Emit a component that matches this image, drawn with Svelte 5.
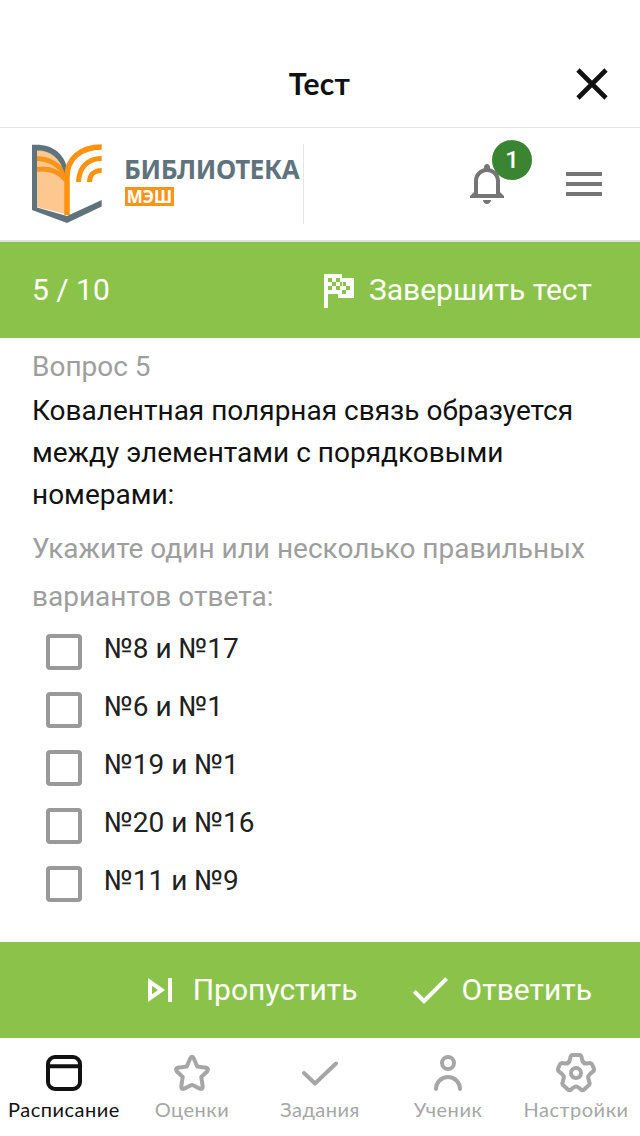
<script>
  let answers = [
    { text: '№8 и №17', checked: false },
    { text: '№6 и №1', checked: false },
    { text: '№19 и №1', checked: false },
    { text: '№20 и №16', checked: false },
    { text: '№11 и №9', checked: false }
  ];

  const tabs = [
    { id: 'schedule', label: 'Расписание' },
    { id: 'marks', label: 'Оценки' },
    { id: 'tasks', label: 'Задания' },
    { id: 'student', label: 'Ученик' },
    { id: 'settings', label: 'Настройки' }
  ];

  let activeTab = 'schedule';
</script>

<div class="screen">
  <header class="title-bar">
    <h1>Тест</h1>
    <button class="close" aria-label="Закрыть">
      <svg width="32" height="32" viewBox="0 0 32 32">
        <path d="M2 2l28 28M30 2l-28 28" fill="none" stroke="#111" stroke-width="4.6" />
      </svg>
    </button>
  </header>

  <div class="library-bar">
    <div class="logo">
      <svg width="70" height="80" viewBox="0 0 70 80">
        <path d="M5 6C18 7 29 13 33 27V70L5 63z" fill="#fdc88f" />
        <path d="M5 14.500Q23 15 33.500 31M5 25.500Q23 23 34 36" fill="none" stroke="#f7941d" stroke-width="5" />
        <path d="M0 .7H7C22 1.500 32 11 34.500 22L33 30C28 14 19 6.500 5 6.500V63.500L35 72L69.700 56V62.500L35 79L0 66z" fill="#5f737d" />
        <path d="M35 71V33C35 15 48 3 69.700 3" fill="none" stroke="#ff930f" stroke-width="5.500" />
        <path d="M46.500 38C47 24 55 14.500 69.700 14.500M57.500 38C57.500 31 62 26.500 69.700 26.500" fill="none" stroke="#ff930f" stroke-width="5" />
      </svg>
      <div class="logo-text">
        <span class="logo-name">БИБЛИОТЕКА</span>
        <span class="logo-tag">МЭШ</span>
      </div>
    </div>
    <div class="tools">
      <button class="bell" aria-label="Уведомления">
        <svg width="48" height="48" viewBox="0 0 24 24" fill="#757575">
          <path d="M11.5 22c1.1 0 2-.9 2-2h-4c0 1.100.9 2 2 2zm6.500-6v-5.500c0-3.070-2.130-5.640-5-6.320V3.500c0-.83-.67-1.500-1.500-1.500S10 2.670 10 3.500v.68c-2.870.68-5 3.250-5 6.320V16l-2 2v1h17v-1l-2-2zm-2 1H7v-6.500C7 8.010 9.010 6 11.500 6S16 8.010 16 10.500V17z" />
        </svg>
        <span class="badge">1</span>
      </button>
      <button aria-label="Меню">
        <svg width="48" height="48" viewBox="0 0 24 24" fill="#757575">
          <path d="M3 18h18v-2H3v2zm0-5h18v-2H3v2zm0-7v2h18V6H3z" />
        </svg>
      </button>
    </div>
  </div>

  <div class="action-bar progress">
    <span class="counter">5 / 10</span>
    <button class="finish">
      <svg width="48" height="48" viewBox="0 0 48 48" fill="#fff">
        <path d="M10 8H28V12H40V32H24V28H14V42H10z" />
        <path
          d="M14 12h4v4h-4zM22 12h4v4h-4zM18 16h4v4h-4zM26 16h6v4h-6zM14 20h4v4h-4zM22 20h4v4h-4zM32 20h4v4h-4zM28 24h4v4h-4z"
          fill="#8bc34a"
        />
        <path d="M28 16h1v4h-1z" />
      </svg>
      <span>Завершить тест</span>
    </button>
  </div>

  <main>
    <p class="number">Вопрос 5</p>
    <p class="question">Ковалентная полярная связь образуется<br />между элементами с порядковыми<br />номерами:</p>
    <p class="hint">Укажите один или несколько правильных<br />вариантов ответа:</p>
    <div class="answers">
      {#each answers as answer}
        <label class="answer">
          <input type="checkbox" bind:checked={answer.checked} />
          <span>{answer.text}</span>
        </label>
      {/each}
    </div>
  </main>

  <div class="action-bar actions">
    <button class="skip">
      <svg width="48" height="48" viewBox="0 0 24 24" fill="#fff">
        <path d="M6 18l8.500-6L6 6v12zm2-8.140L11.030 12 8 14.140V9.860zM16 6h2v12h-2z" />
      </svg>
      <span>Пропустить</span>
    </button>
    <button class="reply">
      <svg width="48" height="48" viewBox="0 0 24 24" fill="#fff">
        <path d="M9 16.170L4.830 12l-1.420 1.410L9 19 21 7l-1.410-1.410z" />
      </svg>
      <span>Ответить</span>
    </button>
  </div>

  <nav>
    {#each tabs as tab}
      <button class="tab {tab.id}" class:active={activeTab === tab.id} on:click={() => (activeTab = tab.id)}>
        <svg width="40" height="40" viewBox="0 0 40 40">
          {#if tab.id === 'schedule'}
            <rect x="4" y="4" width="32" height="32" rx="7" />
            <path d="M4 13.300h32" />
          {:else if tab.id === 'marks'}
            <path d="M18.300 5.200Q20 2.500 21.700 5.200L25.200 13.500L34.200 14.700Q37 15.700 35.300 18.200L29.300 24L30.700 33.500Q30.700 36.700 27.800 35.600L20 31.800L12.200 35.600Q9.300 36.700 9.300 33.500L10.700 24L4.700 18.200Q3 15.700 5.800 14.700L14.800 13.500z" />
          {:else if tab.id === 'tasks'}
            <path d="M4 20L15 30.500L36 10.500" />
          {:else if tab.id === 'student'}
            <circle cx="20" cy="10" r="6" />
            <path d="M8 36A12 12 0 0 1 32 36" />
          {:else}
            <circle cx="20" cy="20" r="5" />
            <path d="M16.500 2H23.500Q25 2 25.500 4L26.300 7.500Q27.500 11 31 10.500L34 10Q35.500 10 36.200 11.500L38 16Q38.500 17.500 37 18.500L34 21Q31.500 23 32.500 26L33.500 30Q34 31.500 32.500 32.500L28 36.500Q26.500 38 25 36.500L22.500 34.500Q20 32.500 17.500 34.500L15 36.500Q13.500 38 12 36.500L7.500 32.500Q6 31.500 6.500 30L7.500 26Q8.500 23 6 21L3 18.500Q1.500 17.500 2 16L3.800 11.500Q4.500 10 6 10L9 10.500Q12.500 11 13.700 7.500L14.500 4Q15 2 16.500 2z" />
          {/if}
        </svg>
        <span>{tab.label}</span>
      </button>
    {/each}
  </nav>
</div>

<style>
  :global(body) {
    margin: 0;
    background: #fff;
  }

  .screen {
    width: 640px;
    height: 1136px;
    display: flex;
    flex-direction: column;
    overflow: hidden;
    background: #fff;
    font-family: Roboto, 'Liberation Sans', sans-serif;
  }

  button {
    padding: 0;
    border: none;
    background: none;
    color: inherit;
    font: inherit;
    letter-spacing: inherit;
  }

  svg {
    display: block;
    flex-shrink: 0;
  }

  h1,
  p {
    margin: 0;
  }

  .title-bar {
    display: grid;
    grid-template-columns: 64px 1fr 32px;
    align-items: center;
    box-sizing: border-box;
    height: 128px;
    padding: 40px 32px 0;
    border-bottom: 1px solid #e4e2e6;
  }

  h1 {
    grid-column: 2;
    padding: 0 33px 2px 0;
    font-family: Lato, sans-serif;
    font-size: 30px;
    font-weight: 700;
    letter-spacing: 0.3px;
    line-height: 36px;
    text-align: center;
    color: #111;
  }

  .library-bar {
    display: flex;
    justify-content: space-between;
    box-sizing: border-box;
    height: 114px;
    padding: 16px 32px 0;
    border-bottom: 2px solid #e0e0e0;
  }

  .logo {
    display: flex;
    box-sizing: border-box;
    width: 272px;
    height: 80px;
    border-right: 1px solid #e6e6e6;
  }

  .logo-text {
    display: flex;
    flex-direction: column;
    align-items: flex-start;
    padding: 9px 0 0 22px;
    font-family: 'Noto Sans', sans-serif;
    font-weight: 700;
  }

  .logo-name {
    font-size: 26px;
    letter-spacing: -0.4px;
    line-height: 32px;
    color: #5f737d;
  }

  .logo-tag {
    width: 49px;
    height: 19px;
    margin: 2px 0 0 1px;
    background: #f7941d;
    font-size: 17px;
    line-height: 19px;
    text-align: center;
    color: #fff;
  }

  .tools {
    display: flex;
    gap: 48px;
    height: 48px;
    padding-top: 16px;
  }

  .bell {
    position: relative;
  }

  .badge {
    position: absolute;
    top: -20px;
    left: 28px;
    width: 40px;
    height: 40px;
    border-radius: 50%;
    background: #3b8532;
    color: #fff;
    font-size: 24px;
    font-weight: 500;
    line-height: 40px;
  }

  .action-bar {
    display: flex;
    align-items: center;
    box-sizing: border-box;
    height: 96px;
    padding: 0 48px 0 32px;
    background: #8bc34a;
    color: #fff;
    font-size: 30px;
    line-height: 36px;
  }

  .action-bar button {
    display: flex;
    align-items: center;
  }

  .progress {
    justify-content: space-between;
  }

  .finish {
    gap: 7px;
  }

  .actions {
    justify-content: flex-end;
    gap: 48px;
  }

  .skip {
    gap: 9px;
  }

  .reply {
    gap: 8px;
  }

  main {
    height: 604px;
    box-sizing: border-box;
    padding: 8px 32px 0;
    font-size: 28px;
  }

  .number {
    line-height: 42px;
    color: #9e9e9e;
  }

  .question {
    margin-top: 2px;
    line-height: 42px;
    color: #111;
  }

  .hint {
    margin-top: 9px;
    line-height: 48px;
    color: #9e9e9e;
  }

  .answers {
    padding: 6px 0 0 14px;
  }

  .answer {
    display: flex;
    gap: 22px;
    height: 58px;
    line-height: 44px;
    color: #212121;
  }

  .answer input {
    appearance: none;
    box-sizing: border-box;
    width: 36px;
    height: 36px;
    margin: 7px 0 0;
    border: 4px solid #999;
    border-radius: 4px;
  }

  .answer input:checked {
    background: #8bc34a;
  }

  nav {
    display: grid;
    grid-template-columns: repeat(5, 128px);
    height: 98px;
    font-family: Lato, sans-serif;
    font-size: 20px;
    letter-spacing: 0.5px;
  }

  .tab {
    display: flex;
    flex-direction: column;
    align-items: center;
    gap: 4px;
    padding-top: 15px;
    line-height: 24px;
    color: #a6a6a6;
  }

  .tab svg {
    fill: none;
    stroke: currentColor;
    stroke-width: 4;
    stroke-linecap: round;
    stroke-linejoin: round;
  }

  .active {
    color: #111;
  }
</style>
